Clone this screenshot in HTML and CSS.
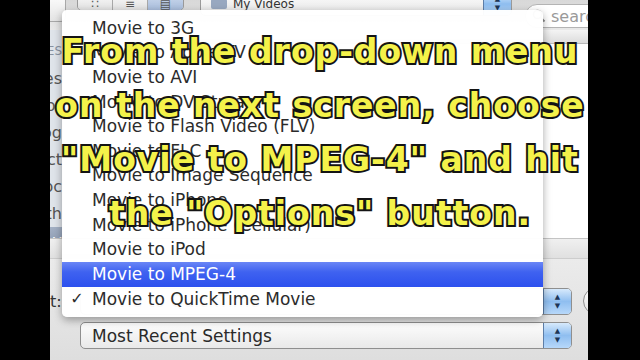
FILE: index.html
```html
<!DOCTYPE html>
<html lang="en">
<head>
  <meta charset="UTF-8" />
  <meta name="viewport" content="width=device-width, initial-scale=1.0"/>
  <title>Export - Movie to MPEG-4</title>
  <link rel="stylesheet" href="styles.css">
</head>
<body>

  <div class="frame">
    <div class="screen">

      <!-- Toolbar (top edge cut off) -->
      <div class="toolbar">
        <div class="nav-button"></div>
        <div class="segmented">
          <span class="seg">&#8759;</span>
          <span class="seg">&#8801;</span>
          <span class="seg active">&#9636;</span>
        </div>
        <div class="path-popup">
          <span class="folder"></span>
          <span class="path-name">My Videos</span>
          <span class="stepper small">&#9650;<br>&#9660;</span>
        </div>
        <div class="search">
          <svg width="14" height="14" viewBox="0 0 14 14">
            <circle cx="5.5" cy="5.5" r="4" fill="none" stroke="#8a8a8a" stroke-width="1.6"/>
            <line x1="8.5" y1="8.5" x2="12.5" y2="12.5" stroke="#8a8a8a" stroke-width="2"/>
          </svg>
          <span>search</span>
        </div>
      </div>

      <!-- File browser -->
      <div class="browser">
        <div class="sidebar">
          <div class="side-item head">ES</div>
          <div class="side-item">es</div>
          <div class="side-item">or</div>
          <div class="side-item">og</div>
          <div class="side-item">ct</div>
          <div class="side-item">oc</div>
          <div class="side-item">th</div>
          <div class="side-item selected">y</div>
        </div>
        <div class="list">
          <div class="list-head"></div>
          <div class="list-body"></div>
        </div>
      </div>
      <div class="splitter"></div>

      <!-- Export options -->
      <div class="options">
        <div class="opt-row">
          <span class="label">t:</span>
          <div class="popup">
            <span class="popup-text">Movie to QuickTime Movie</span>
            <span class="stepper">&#9650;<br>&#9660;</span>
          </div>
          <span class="help"></span>
        </div>
        <div class="opt-row">
          <span class="label"></span>
          <div class="popup">
            <span class="popup-text">Most Recent Settings</span>
            <span class="stepper">&#9650;<br>&#9660;</span>
          </div>
        </div>
      </div>

      <!-- Open drop-down menu -->
      <ul class="menu">
        <li><span class="check"></span>Movie to 3G</li>
        <li><span class="check"></span>Movie to Apple TV</li>
        <li><span class="check"></span>Movie to AVI</li>
        <li><span class="check"></span>Movie to DV Stream</li>
        <li><span class="check"></span>Movie to Flash Video (FLV)</li>
        <li><span class="check"></span>Movie to FLC</li>
        <li><span class="check"></span>Movie to Image Sequence</li>
        <li><span class="check"></span>Movie to iPhone</li>
        <li><span class="check"></span>Movie to iPhone (Cellular)</li>
        <li><span class="check"></span>Movie to iPod</li>
        <li class="highlight"><span class="check"></span>Movie to MPEG-4</li>
        <li><span class="check">&#10003;</span>Movie to QuickTime Movie</li>
      </ul>
    </div>

    <!-- Caption over the video -->
    <div class="caption">
      From the drop-down menu<br>
      on the next screen, choose<br>
      "Movie to MPEG-4" and hit<br>
      the "Options" button.
    </div>
  </div>

</body>
</html>
```

FILE: styles.css
```css
body {
  margin: 0;
  background-color: #000;
  font-family: 'DejaVu Sans', sans-serif;
  overflow: hidden;
}

.frame {
  position: relative;
  width: 640px;
  height: 360px;
  padding-left: 50px;
  box-sizing: border-box;
}

.screen {
  position: relative;
  width: 538px;
  height: 360px;
  overflow: hidden;
  background-color: #e6e6e6;
  display: flex;
  flex-direction: column;
}

/* Toolbar */
.toolbar {
  height: 30px;
  flex-shrink: 0;
  display: flex;
  align-items: flex-start;
  background: linear-gradient(#d8d8d8, #e8e8e8);
}

.toolbar > * {
  flex-shrink: 0;
}

.nav-button {
  width: 22px;
  height: 26px;
  margin: -6px 0 0 -8px;
  border: 1px solid #a8a8a8;
  border-radius: 5px;
  background: linear-gradient(#fdfdfd, #e4e4e4);
}

.segmented {
  display: flex;
  margin: -8px 0 0 11px;
  border: 1px solid #9a9a9a;
  border-radius: 5px;
  overflow: hidden;
}

.seg {
  width: 34px;
  height: 17px;
  line-height: 22px;
  text-align: center;
  font-size: 12px;
  color: #555;
  background: linear-gradient(#fafafa, #e2e2e2);
  border-right: 1px solid #a8a8a8;
}

.seg.active {
  width: 35px;
  border-right: none;
  background: linear-gradient(#cfdcef, #a9bddc);
}

.path-popup {
  display: flex;
  align-items: center;
  width: 310px;
  height: 22px;
  margin: -8px 0 0 16px;
  border: 1px solid #9a9a9a;
  border-radius: 5px;
  background: linear-gradient(#fcfcfc, #e6e6e6);
  overflow: hidden;
}

.folder {
  width: 16px;
  height: 10px;
  margin: 0 6px 0 10px;
  border-radius: 2px;
  background-color: #98a8c0;
}

.path-name {
  flex: 1;
  font-size: 12px;
  color: #333;
}

.search {
  display: flex;
  align-items: center;
  gap: 5px;
  width: 80px;
  height: 22px;
  margin: 4px 0 0 13px;
  padding-left: 6px;
  border: 1px solid #b4b4b4;
  border-radius: 12px;
  background-color: #fff;
  font-size: 16px;
  color: #9a9a9a;
  white-space: nowrap;
}

/* Browser */
.browser {
  height: 208px;
  flex-shrink: 0;
  display: flex;
}

.sidebar {
  width: 12px;
  flex-shrink: 0;
  padding-top: 8px;
  background-color: #dfe4ea;
  border-right: 1px solid #b9bdc3;
  overflow: hidden;
}

.side-item {
  height: 27px;
  line-height: 27px;
  font-size: 16px;
  color: #555;
  white-space: nowrap;
  direction: rtl;
  text-align: right;
}

.side-item.head {
  font-size: 12px;
  color: #8892a0;
}

.side-item.selected {
  height: 28px;
  color: #fff;
  background: linear-gradient(#a3b0c4, #7f8ea8);
}

.list {
  flex: 1;
  background-color: #fff;
}

.list-head {
  height: 13px;
  background: linear-gradient(#f4f4f4, #dcdcdc);
  border-bottom: 1px solid #b8b8b8;
}

.splitter {
  height: 19px;
  flex-shrink: 0;
  background: linear-gradient(#f0f0f0, #e0e0e0);
  border-top: 1px solid #c4c4c4;
  border-bottom: 1px solid #cdcdcd;
}

/* Export options */
.options {
  flex: 1;
  padding-top: 28px;
  display: flex;
  flex-direction: column;
  gap: 7px;
  background: linear-gradient(#ebebeb, #dedede);
}

.opt-row {
  display: flex;
  align-items: center;
}

.opt-row > * {
  flex-shrink: 0;
}

.label {
  width: 30px;
  padding-right: 22px;
  box-sizing: border-box;
  text-align: right;
  font-size: 16px;
  color: #333;
}

.popup {
  display: flex;
  align-items: center;
  width: 490px;
  height: 25px;
  border: 1px solid #8f8f8f;
  border-radius: 5px;
  background: linear-gradient(#fdfdfd, #e9e9e9);
  overflow: hidden;
}

.popup-text {
  flex: 1;
  padding-left: 11px;
  font-size: 17px;
  color: #2a2a2a;
}

.stepper {
  width: 28px;
  height: 25px;
  border-left: 1px solid #5d7ea8;
  background: linear-gradient(#d7eafc, #8fbef0 50%, #b7d8fa);
  color: #1d3556;
  font-size: 7px;
  line-height: 9px;
  text-align: center;
  padding-top: 4px;
  box-sizing: border-box;
}

.stepper.small {
  height: 22px;
  padding-top: 2px;
}

.help {
  width: 26px;
  height: 26px;
  margin-left: 11px;
  border: 1px solid #8f8f8f;
  border-radius: 50%;
  background: linear-gradient(#fdfdfd, #e2e2e2);
}

/* Drop-down menu */
.menu {
  position: absolute;
  left: 12px;
  top: 10px;
  width: 481px;
  margin: 0;
  padding: 5.7px 0;
  list-style: none;
  background-color: rgba(255, 255, 255, 0.97);
  border-radius: 5px;
  box-shadow: 0 3px 9px rgba(0, 0, 0, 0.35);
}

.menu li {
  display: grid;
  grid-template-columns: 30px 1fr;
  height: 24.64px;
  line-height: 24.64px;
  font-size: 17px;
  color: #2b2b2b;
  white-space: nowrap;
}

.menu .check {
  text-align: center;
  font-size: 16px;
}

.menu li.highlight {
  color: #fff;
  background: linear-gradient(#6a86f6, #3f62f0 40%, #2c50ee);
}

/* Caption */
.caption {
  position: absolute;
  left: 0;
  top: 25px;
  width: 640px;
  text-align: center;
  font-family: 'DejaVu Sans', sans-serif;
  font-weight: bold;
  font-size: 33px;
  letter-spacing: 1px;
  line-height: 54px;
  color: #f4f24a;
  -webkit-text-stroke: 4px #141414;
  paint-order: stroke fill;
}
```
